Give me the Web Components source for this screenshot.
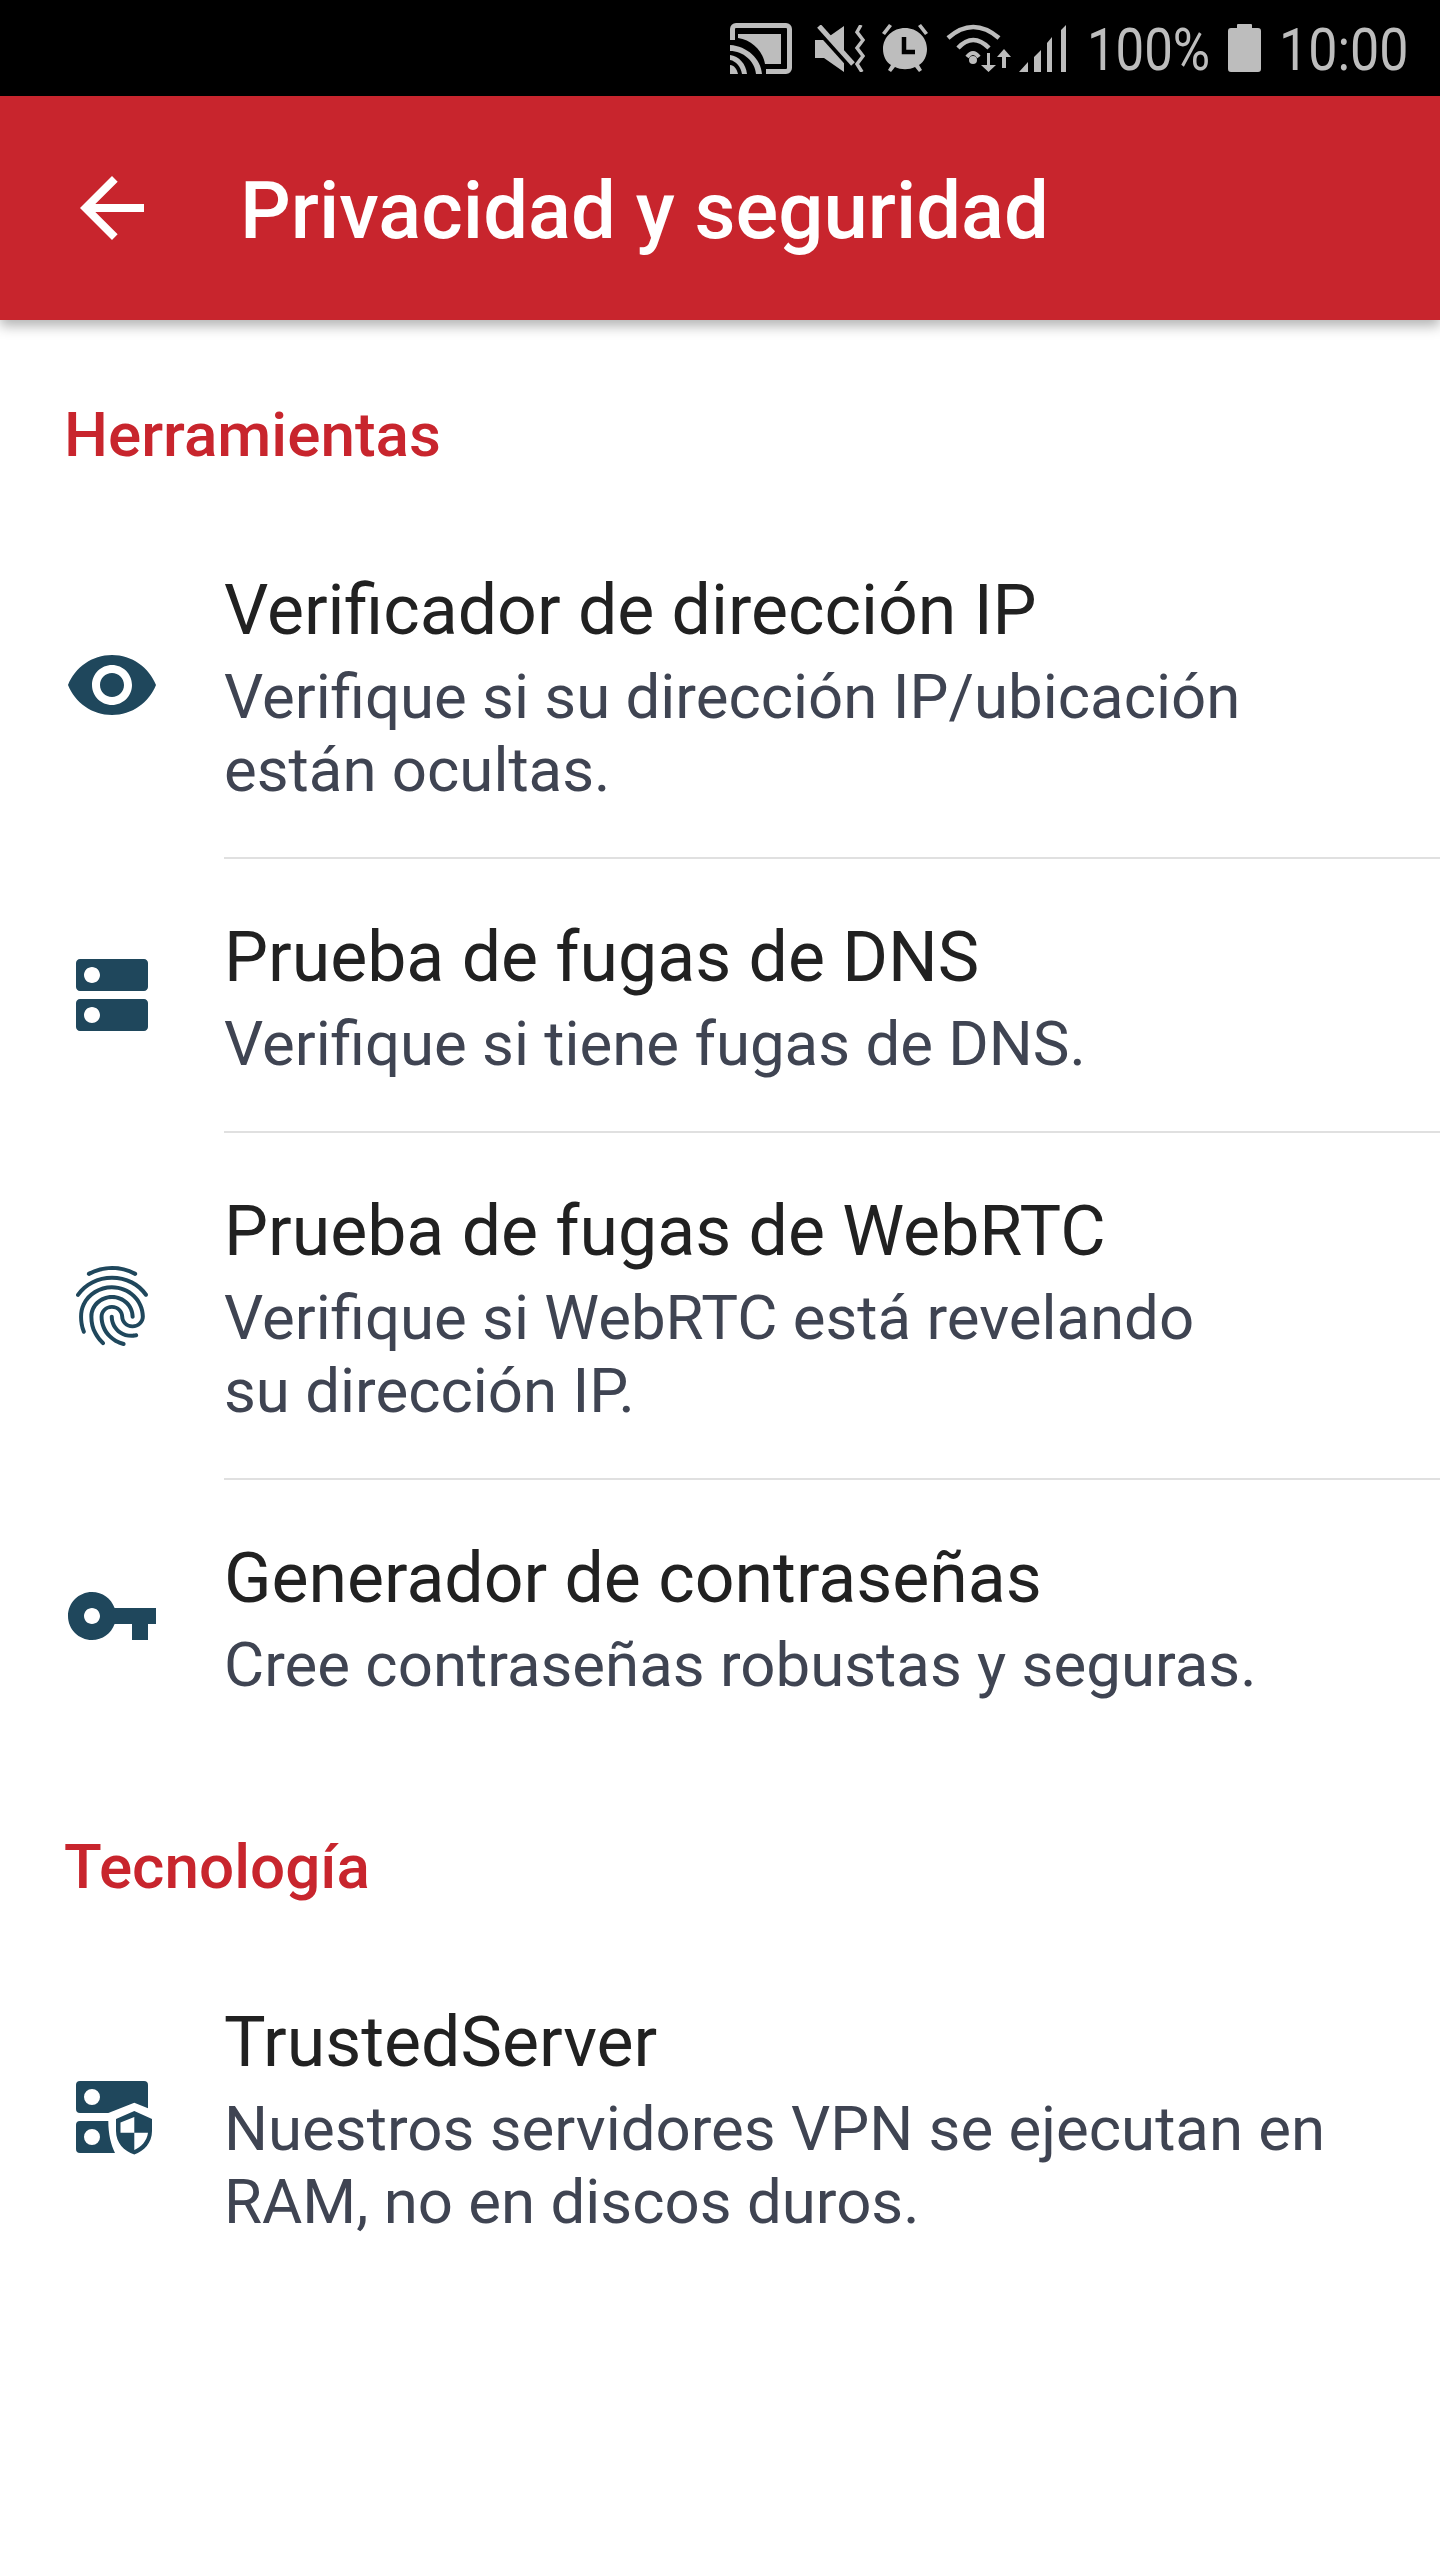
<!DOCTYPE html>
<html lang="es">
<head>
<meta charset="utf-8">
<title>Privacidad y seguridad</title>
<style>
  html, body { margin: 0; padding: 0; background: #fff; }
  body { font-family: Roboto, "Noto Sans", sans-serif; width: 1440px; height: 2560px; overflow: hidden; }
</style>
</head>
<body>
<status-bar></status-bar>
<app-bar>Privacidad y seguridad</app-bar>
<main-list>
  <section-title>Herramientas</section-title>
  <tool-row icon="eye" heading="Verificador de dirección IP" divider>Verifique si su dirección IP/ubicación<br>están ocultas.</tool-row>
  <tool-row icon="server" heading="Prueba de fugas de DNS" divider>Verifique si tiene fugas de DNS.</tool-row>
  <tool-row icon="finger" heading="Prueba de fugas de WebRTC" divider>Verifique si WebRTC está revelando<br>su dirección IP.</tool-row>
  <tool-row icon="key" heading="Generador de contraseñas">Cree contraseñas robustas y seguras.</tool-row>
  <section-title class="second">Tecnología</section-title>
  <tool-row icon="trusted" heading="TrustedServer">Nuestros servidores VPN se ejecutan en<br>RAM, no en discos duros.</tool-row>
</main-list>

<script>
// iconos de la lista, material en rejilla de 24 salvo el ultimo (96)
const ICONS = {
  eye: `<svg viewBox="0 0 24 24"><path d="M12 4.500C7 4.500 2.730 7.610 1 12c1.730 4.390 6 7.500 11 7.500s9.270-3.110 11-7.500c-1.730-4.390-6-7.500-11-7.500zM12 17c-2.760 0-5-2.240-5-5s2.240-5 5-5 5 2.240 5 5-2.240 5-5 5zm0-8c-1.660 0-3 1.340-3 3s1.340 3 3 3 3-1.340 3-3-1.340-3-3-3z"/></svg>`,
  server: `<svg viewBox="0 0 24 24"><path d="M20 13H4c-.55 0-1 .45-1 1v6c0 .55.45 1 1 1h16c.55 0 1-.45 1-1v-6c0-.55-.45-1-1-1zM7 19c-1.100 0-2-.9-2-2s.9-2 2-2 2 .9 2 2-.9 2-2 2zM20 3H4c-.55 0-1 .45-1 1v6c0 .55.45 1 1 1h16c.55 0 1-.45 1-1V4c0-.55-.45-1-1-1zM7 9c-1.100 0-2-.9-2-2s.9-2 2-2 2 .9 2 2-.9 2-2 2z"/></svg>`,
  finger: `<svg viewBox="0 0 24 24"><path d="M17.810 4.470c-.08 0-.16-.02-.23-.06C15.660 3.420 14 3 12.010 3c-1.980 0-3.860.47-5.570 1.410-.24.13-.54.04-.68-.2-.13-.24-.04-.55.2-.68C7.820 2.520 9.860 2 12.010 2c2.130 0 3.990.47 6.030 1.520.25.13.34.43.21.67-.09.18-.26.28-.44.28zM3.500 9.720c-.1 0-.2-.03-.29-.09-.23-.16-.28-.47-.12-.7.99-1.400 2.250-2.500 3.750-3.270C9.980 4.040 14 4.030 17.150 5.650c1.500.77 2.760 1.860 3.750 3.250.16.22.11.54-.12.7-.23.16-.54.11-.7-.12-.9-1.260-2.040-2.250-3.390-2.940-2.870-1.470-6.540-1.470-9.400.01-1.360.7-2.500 1.700-3.400 2.960-.08.14-.23.21-.39.21zm6.250 12.070c-.13 0-.26-.05-.35-.15-.87-.87-1.340-1.430-2.010-2.640-.69-1.230-1.050-2.730-1.050-4.340 0-2.970 2.540-5.390 5.660-5.390s5.660 2.420 5.660 5.390c0 .28-.22.5-.5.5s-.5-.22-.5-.5c0-2.420-2.090-4.390-4.660-4.390-2.570 0-4.660 1.970-4.660 4.390 0 1.440.32 2.770.93 3.850.64 1.150 1.080 1.640 1.850 2.420.19.2.19.51 0 .71-.11.1-.24.15-.37.15zm7.170-1.850c-1.190 0-2.240-.3-3.100-.89-1.490-1.010-2.380-2.650-2.380-4.390 0-.28.22-.5.5-.5s.5.22.5.5c0 1.410.72 2.740 1.940 3.560.71.48 1.540.71 2.540.71.24 0 .64-.03 1.040-.1.27-.05.53.13.58.41.05.27-.13.53-.41.58-.57.11-1.070.12-1.210.12zM14.910 22c-.04 0-.09-.01-.13-.02-1.590-.44-2.630-1.030-3.720-2.100-1.400-1.390-2.170-3.240-2.170-5.220 0-1.620 1.380-2.940 3.080-2.940 1.700 0 3.080 1.320 3.080 2.940 0 1.070.93 1.940 2.080 1.940s2.080-.87 2.080-1.940c0-3.770-3.250-6.830-7.250-6.830-2.840 0-5.440 1.580-6.610 4.030-.39.81-.59 1.760-.59 2.800 0 .78.07 2.010.67 3.610.1.26-.03.55-.29.64-.26.1-.55-.04-.64-.29-.49-1.310-.73-2.610-.73-3.960 0-1.200.23-2.290.68-3.240 1.330-2.790 4.280-4.600 7.510-4.600 4.550 0 8.250 3.510 8.250 7.830 0 1.620-1.380 2.940-3.080 2.940s-3.080-1.320-3.080-2.940c0-1.070-.93-1.940-2.080-1.940s-2.080.87-2.080 1.940c0 1.710.66 3.310 1.870 4.510.95.94 1.860 1.460 3.270 1.850.27.07.42.35.35.61-.05.23-.26.38-.47.38z"/></svg>`,
  key: `<svg viewBox="0 0 24 24"><path d="M12.650 10C11.830 7.670 9.610 6 7 6c-3.310 0-6 2.690-6 6s2.690 6 6 6c2.610 0 4.830-1.670 5.650-4H17v4h4v-4h2v-4H12.650zM7 14c-1.100 0-2-.9-2-2s.9-2 2-2 2 .9 2 2-.9 2-2 2z"/></svg>`,
  trusted: `<svg viewBox="0 0 96 96">
    <path fill-rule="evenodd" d="M16 12h64a4 4 0 0 1 4 4v23.300L70.300 33.700 44.300 44H16a4 4 0 0 1-4-4V16a4 4 0 0 1 4-4Zm12 8a8 8 0 1 0 0 16 8 8 0 0 0 0-16ZM16 52h28.300C44.300 65 47 76 51 84H16a4 4 0 0 1-4-4V56a4 4 0 0 1 4-4Zm12 8a8 8 0 1 0 0 16 8 8 0 0 0 0-16Z"/>
    <path fill-rule="evenodd" d="M70.300 42L88 50V62C88 74 80 82 70.300 85.500 60 82 52 74 52 62V50Zm0 6L56.500 53.500V63.700H70.300ZM70.300 63.700V81C77 78 83 72 84 63.700Z"/>
  </svg>`
};

class StatusBar extends HTMLElement {
  constructor() {
    super();
    this.attachShadow({ mode: 'open' });
    this.shadowRoot.innerHTML = `
      <style>
        :host {
          display: flex;
          justify-content: flex-end;
          align-items: center;
          height: 96px;
          box-sizing: border-box;
          background: #000;
          color: #bdbdbd;
          padding-right: 32px;
          font: 400 60px/1 Roboto, sans-serif;
        }
        svg { display: block; fill: currentColor; flex: none; }
        .txt { display: flex; justify-content: center; white-space: nowrap; padding-top: 3px; }
        .txt span { display: block; flex: none; }
        .pct { width: 122px; margin-left: 21px; }
        .pct span { transform: scaleX(.85); }
        .time { width: 128px; margin-left: 19px; }
        .time span { transform: scaleX(.866); }
      </style>
      <svg width="62" height="51" viewBox="0 0 62 51">
        <path d="M6 0h50a6 6 0 0 1 6 6v39a6 6 0 0 1-6 6H36v-5h20a1 1 0 0 0 1-1V6a1 1 0 0 0-1-1H6a1 1 0 0 0-1 1v11H0V6a6 6 0 0 1 6-6Z"/>
        <path d="M8 11h43v30H35C33 28 22 17 8 15Z"/>
        <path d="M0 22c17 1 31 14 32 29h-6C25 38 13 28 0 28Zm0 10c9 1 16 9 17 19h-5C11 44 6 38 0 37Zm0 10c4 0 7 4 8 9H0Z"/>
      </svg>
      <svg style="margin-left:23px" width="50" height="47" viewBox="0 0 50 47">
        <path d="M0 15H9L29 1V47L9 33H0Z"/>
        <path d="M2 3L37 42" fill="none" stroke="#000" stroke-width="7"/>
        <path d="M4 1L38 39" fill="none" stroke="currentColor" stroke-width="5"/>
        <path d="M46 0L42 7l6 8-6 8 6 8-6 8 5 8" fill="none" stroke="currentColor" stroke-width="3.500"/>
      </svg>
      <svg style="margin-left:17px" width="46" height="48" viewBox="0 0 46 48">
        <path d="M0 9L7 0l3 2-7 9ZM46 9L39 0l-3 2 7 9Z"/>
        <path d="M23 4C35 4 45 13 45 25C45 32 42 38 37 41L40 46l-3 2-4-5C27 46 19 46 13 43L9 48l-3-2 3-5C4 38 1 32 1 25C1 13 11 4 23 4Z"/>
        <path d="M22 13V28H33" fill="none" stroke="#000" stroke-width="4.500"/>
      </svg>
      <svg style="margin-left:18px" width="65" height="48" viewBox="0 0 65 48">
        <g fill="none" stroke="currentColor" stroke-width="4.500">
          <path d="M2 14Q27-8 53 14"/>
          <path d="M12 24Q27 8 43 24"/>
          <path d="M21 33Q27 25 33 33" stroke-width="4"/>
        </g>
        <circle cx="27" cy="36" r="4"/>
        <path d="M41 29h3V41h6L42.500 48 35 41h6ZM58 25l7 8h-5V44H56V33H51Z"/>
      </svg>
      <svg style="margin-left:8px" width="48" height="47" viewBox="0 0 48 47">
        <path d="M0 47L9 37V47ZM15 32L22 25V47H15ZM28 18L33 12V47H28ZM42 5L47 0V47H42Z"/>
      </svg>
      <span class="txt pct"><span>100%</span></span>
      <svg style="margin-left:18px" width="33" height="48" viewBox="0 0 33 48">
        <path d="M9 1a1 1 0 0 1 1-1H23a1 1 0 0 1 1 1V4H30a3 3 0 0 1 3 3V45a3 3 0 0 1-3 3H3a3 3 0 0 1-3-3V7A3 3 0 0 1 3 4H9Z"/>
      </svg>
      <span class="txt time"><span>10:00</span></span>
    `;
  }
}

class AppBar extends HTMLElement {
  constructor() {
    super();
    this.attachShadow({ mode: 'open' });
    this.shadowRoot.innerHTML = `
      <style>
        :host {
          display: flex;
          align-items: center;
          height: 224px;
          box-sizing: border-box;
          background: #c8252d;
          color: #fff;
          padding-left: 64px;
          position: relative;
          box-shadow: 0 6px 12px rgba(0,0,0,.3);
        }
        svg { display: block; flex: none; margin-right: 80px; fill: currentColor; }
        .title { font: 500 79.7px/1 Roboto, sans-serif; white-space: nowrap; padding-top: 5px; }
      </style>
      <svg width="96" height="96" viewBox="0 0 24 24">
        <path d="M20 11H7.830l5.590-5.590L12 4l-8 8 8 8 1.410-1.410L7.830 13H20v-2z"/>
      </svg>
      <span class="title"><slot></slot></span>
    `;
  }
}

class MainList extends HTMLElement {
  constructor() {
    super();
    this.attachShadow({ mode: 'open' });
    this.shadowRoot.innerHTML = `
      <style>
        :host { display: block; padding-top: 84px; }
      </style>
      <slot></slot>
    `;
  }
}

class SectionTitle extends HTMLElement {
  constructor() {
    super();
    this.attachShadow({ mode: 'open' });
    this.shadowRoot.innerHTML = `
      <style>
        :host {
          display: block;
          padding-left: 64px;
          margin-bottom: 46px;
          color: #c8252d;
          font: 500 62px/1 Roboto, sans-serif;
        }
        :host(.second) { margin-top: 82px; }
      </style>
      <slot></slot>
    `;
  }
}

class ToolRow extends HTMLElement {
  constructor() {
    super();
    this.attachShadow({ mode: 'open' });
    const icon = ICONS[this.getAttribute('icon')];
    this.shadowRoot.innerHTML = `
      <style>
        :host { display: flex; align-items: stretch; }
        .ico { width: 224px; flex: none; display: flex; align-items: center; justify-content: center; padding-bottom: 2px; }
        svg { display: block; width: 96px; height: 96px; fill: #1f475c; }
        .body { flex: 1; padding: 54px 0 50px; border-bottom: 2px solid transparent; }
        :host([divider]) .body { border-bottom-color: #e0e0e0; }
        .head { font: 400 69.8px/88px Roboto, sans-serif; color: #212121; white-space: nowrap; }
        .sub { font: 400 61.75px/73px Roboto, sans-serif; color: #3f4452; white-space: nowrap; margin-top: 7px; }
      </style>
      <div class="ico">${icon}</div>
      <div class="body">
        <div class="head">${this.getAttribute('heading')}</div>
        <div class="sub"><slot></slot></div>
      </div>
    `;
  }
}

customElements.define('status-bar', StatusBar);
customElements.define('app-bar', AppBar);
customElements.define('main-list', MainList);
customElements.define('section-title', SectionTitle);
customElements.define('tool-row', ToolRow);
</script>
</body>
</html>
